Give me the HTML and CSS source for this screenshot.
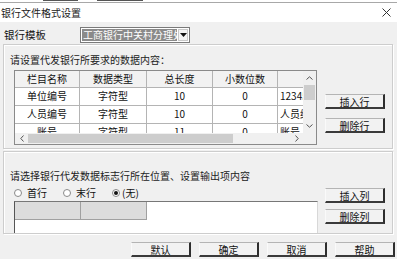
FILE: index.html
```html
<!DOCTYPE html>
<html lang="zh-CN">
<head>
<meta charset="utf-8">
<title>银行文件格式设置</title>
<link rel="stylesheet" href="styles.css">
</head>
<body>
<div class="topstrip"><span class="frag f1"></span><span class="frag f2"></span></div>
<div class="titlebar">
  <span class="title">银行文件格式设置</span>
  <svg class="close" width="9" height="9" viewBox="0 0 9 9"><path d="M0.5 0.5L8.5 8.5M8.5 0.5L0.5 8.5" stroke="#333" stroke-width="1" fill="none"/></svg>
</div>
<div class="main">
  <div class="tpl-row">
    <span class="tpl-label">银行模板</span>
    <div class="combo">
      <span class="combo-text">工商银行中关村分理处</span>
      <span class="combo-btn"><svg width="7" height="4" viewBox="0 0 7 4"><path d="M0 0H7L3.5 4Z" fill="#111"/></svg></span>
    </div>
  </div>

  <div class="group g1">
    <div class="g-left">
      <div class="hint">请设置代发银行所要求的数据内容：</div>
      <div class="table">
        <div class="t-view">
          <div class="row head"><span>栏目名称</span><span>数据类型</span><span>总长度</span><span>小数位数</span><span class="last"></span></div>
          <div class="row"><span>单位编号</span><span>字符型</span><span>10</span><span>0</span><span class="last">12345678</span></div>
          <div class="row"><span>人员编号</span><span>字符型</span><span>10</span><span>0</span><span class="last">人员编号</span></div>
          <div class="row"><span>账号</span><span>字符型</span><span>11</span><span>0</span><span class="last">账号</span></div>
        </div>
        <div class="vscroll">
          <span class="sb-btn"><svg width="7" height="4" viewBox="0 0 7 4"><path d="M0.5 3.5L3.5 0.8L6.5 3.5" stroke="#555" fill="none"/></svg></span>
          <span class="sb-track v"><span class="v-thumb"></span></span>
          <span class="sb-btn"><svg width="7" height="4" viewBox="0 0 7 4"><path d="M0.5 0.5L3.5 3.2L6.5 0.5" stroke="#555" fill="none"/></svg></span>
        </div>
        <div class="hscroll">
          <span class="sb-btn h"><svg width="4" height="7" viewBox="0 0 4 7"><path d="M3.5 0.5L0.8 3.5L3.5 6.5" stroke="#555" fill="none"/></svg></span>
          <span class="sb-track h"><span class="h-thumb"></span></span>
          <span class="sb-btn h"><svg width="4" height="7" viewBox="0 0 4 7"><path d="M0.5 0.5L3.2 3.5L0.5 6.5" stroke="#555" fill="none"/></svg></span>
        </div>
        <div class="corner"></div>
      </div>
    </div>
    <div class="g-right r1">
      <button class="btn side">插入行</button>
      <button class="btn side">删除行</button>
    </div>
  </div>

  <div class="group g2">
    <div class="g-left">
      <div class="hint">请选择银行代发数据标志行所在位置、设置输出项内容</div>
      <div class="radios">
        <label class="radio"><span class="dot"></span><span>首行</span></label>
        <label class="radio"><span class="dot"></span><span>末行</span></label>
        <label class="radio on"><span class="dot"></span><span class="paren">(无)</span></label>
      </div>
      <div class="grid2">
        <div class="g2-head"><span></span><span></span></div>
      </div>
    </div>
    <div class="g-right r2">
      <button class="btn side">插入列</button>
      <button class="btn side">删除列</button>
    </div>
  </div>

  <div class="footer">
    <button class="btn foot">默认</button>
    <button class="btn foot">确定</button>
    <button class="btn foot">取消</button>
    <button class="btn foot">帮助</button>
  </div>
</div>
</body>
</html>
```

FILE: styles.css
```css
* { box-sizing: border-box; }
html, body { margin: 0; padding: 0; }
body {
  width: 397px;
  height: 259px;
  overflow: hidden;
  background: #f0f0f0;
  font-family: "Noto Sans CJK SC", "Noto Sans", sans-serif;
  font-size: 10px;
  color: #111;
}

.topstrip {
  height: 3px;
  background: #fff;
  border-bottom: 1px solid #a8a8a8;
  position: relative;
}
.frag { position: absolute; top: 0; height: 1px; background: #555; }
.f1 { left: 43px; width: 35px; }
.f2 { left: 97px; width: 46px; }

.titlebar {
  height: 19px;
  background: #fff;
  display: flex;
  align-items: center;
  justify-content: space-between;
  padding: 0 6px 0 1px;
}
.title { line-height: 12px; color: #222; }
.close { display: block; }

.main { padding: 0 4px 0 3px; }

.tpl-row {
  display: flex;
  align-items: center;
  margin-top: 5px;
  height: 16px;
}
.tpl-label { width: 77px; padding-left: 1px; font-size: 10.5px; line-height: 12px; }
.combo {
  width: 110px;
  height: 16px;
  border: 1px solid #7a7a7a;
  background: #fff;
  display: flex;
  padding: 1px;
}
.combo-text {
  flex: 1;
  background: #8a8a8a;
  color: #fff;
  line-height: 12px;
  padding-left: 1px;
  white-space: nowrap;
  overflow: hidden;
}
.combo-btn {
  width: 10px;
  margin-left: 1px;
  background: #f4f4f4;
  border: 1px solid #c8c8c8;
  display: flex;
  align-items: center;
  justify-content: center;
}
.combo-btn svg { display: block; }

.group {
  border: 1px solid #cdcdcd;
  box-shadow: inset 1px 1px 0 #fff, 1px 1px 0 #fff;
  display: flex;
}
.g1 { margin-top: 1px; height: 105px; }
.g2 { margin-top: 2px; height: 83px; }

.g-left { padding-left: 6px; }
.g1 .g-left { padding-top: 9px; }
.g2 .g-left { padding-top: 18px; }
.hint { line-height: 12px; white-space: nowrap; color: #222; }

.table {
  margin: 4px 0 0 4px;
  width: 303px;
  height: 75px;
  border: 1px solid #8a8a8a;
  display: grid;
  grid-template-columns: 288px 13px;
  grid-template-rows: 62px 11px;
  background: #fff;
}
.t-view { overflow: hidden; }
.row {
  display: grid;
  grid-template-columns: 65px 67px 66px 65px 25px;
  height: 18px;
}
.row.head { height: 17px; background: #f2f2f2; }
.row span {
  border-right: 1px solid #b4b4b4;
  border-bottom: 1px solid #b4b4b4;
  text-align: center;
  line-height: 16px;
  white-space: nowrap;
  overflow: hidden;
}
.row span.last { border-right: none; text-align: left; padding-left: 2px; }

.vscroll {
  background: #f0f0f0;
  display: flex;
  flex-direction: column;
}
.sb-btn {
  height: 14px;
  display: flex;
  align-items: center;
  justify-content: center;
  flex: none;
}
.sb-btn svg { display: block; }
.sb-track.v { flex: 1; padding: 0 1px; }
.v-thumb { display: block; height: 15px; background: #cdcdcd; }

.hscroll {
  background: #f0f0f0;
  display: flex;
}
.sb-btn.h { height: auto; width: 13px; }
.sb-track.h { flex: 1; padding: 1px 0; }
.h-thumb { display: block; width: 205px; height: 100%; background: #cdcdcd; }
.corner { background: #f0f0f0; }

.g-right { display: flex; flex-direction: column; }
.r1 { margin-left: 8px; padding-top: 49px; gap: 9px; }
.r2 { margin-left: 7px; padding-top: 36px; gap: 6px; }

.btn {
  font-family: inherit;
  font-size: 10px;
  color: #111;
  padding: 0;
  margin: 0;
  line-height: 11px;
  background: #f2f2f2;
  border-style: solid;
  border-width: 1px 2px 2px 1px;
  border-color: #b4b4b4 #2e2e2e #3a3a3a #fafafa;
}
.btn.side { width: 60px; height: 15px; }
.btn.foot { width: 60px; height: 15px; }

.radios {
  display: flex;
  align-items: center;
  margin-top: 5px;
  height: 12px;
  padding-left: 4px;
}
.radio { display: flex; align-items: center; line-height: 12px; margin-right: 16px; }
.dot {
  width: 8px;
  height: 8px;
  border-radius: 50%;
  border: 1px solid #8a8a8a;
  background: #fff;
  margin-right: 5px;
  display: flex;
  align-items: center;
  justify-content: center;
}
.radio.on .dot { margin-right: 2px; }
.radio.on .dot::after {
  content: "";
  width: 4px;
  height: 4px;
  border-radius: 50%;
  background: #111;
}

.grid2 {
  margin: 2px 0 0 4px;
  width: 304px;
  height: 32px;
  background: #fff;
  border-left: 1px solid #555;
  border-top: 1px solid #777;
  border-right: 1px solid #d8d8d8;
}
.g2-head { display: flex; height: 18px; }
.g2-head span {
  width: 66px;
  background: #dcdcdc;
  border-right: 1px solid #a0a0a0;
  border-bottom: 1px solid #a0a0a0;
}

.footer {
  display: flex;
  justify-content: flex-end;
  gap: 8px;
  margin-top: 8px;
  margin-right: -2px;
}
```
